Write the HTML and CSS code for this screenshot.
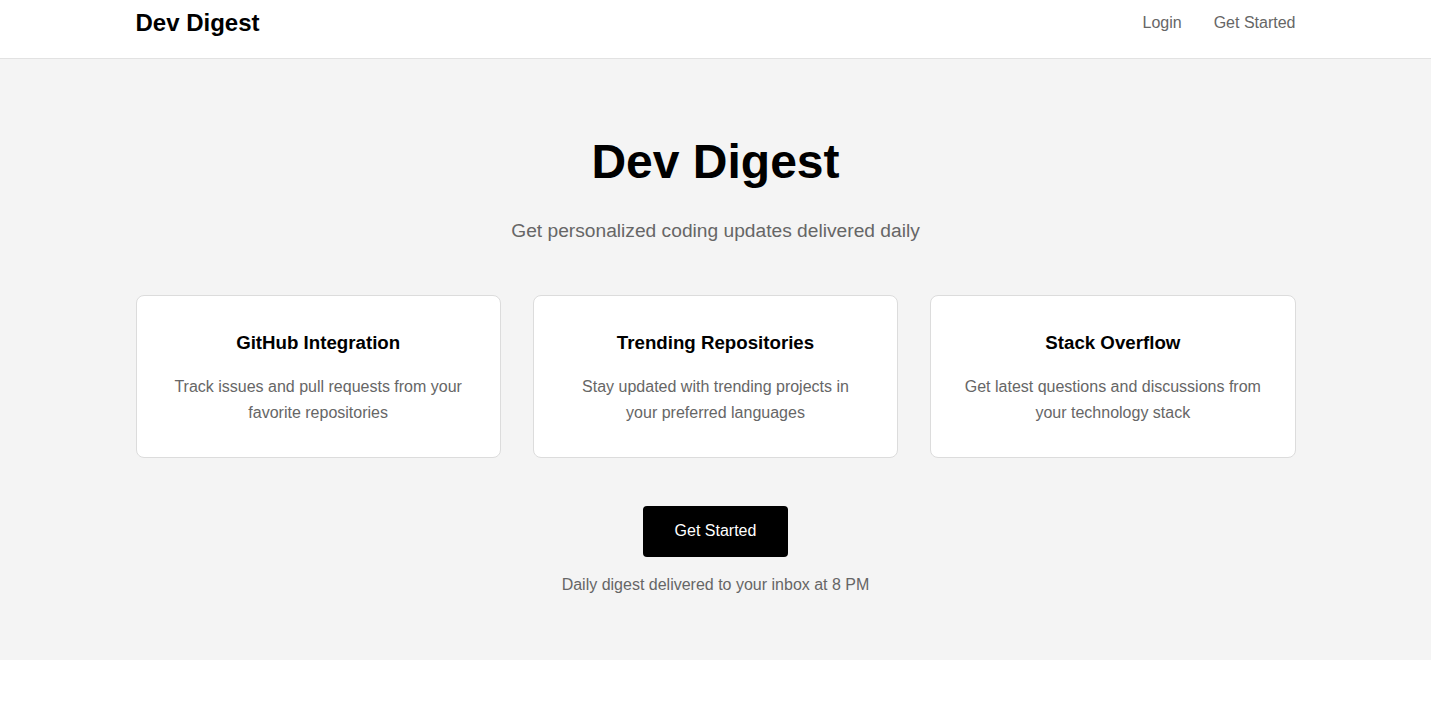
FILE: index.html
```html
<!DOCTYPE html>
<html lang="en">
<head>
<meta charset="utf-8">
<title>Dev Digest</title>
<link rel="stylesheet" href="styles.css">
</head>
<body>
<header class="site-header">
  <div class="container header-inner">
    <div class="logo">Dev Digest</div>
    <nav class="nav">
      <a href="#" class="nav-link">Login</a>
      <a href="#" class="nav-link">Get Started</a>
    </nav>
  </div>
</header>
<main class="hero">
  <div class="container hero-inner">
    <h1 class="hero-title">Dev Digest</h1>
    <p class="hero-subtitle">Get personalized coding updates delivered daily</p>
    <div class="features">
      <div class="card">
        <h3 class="card-title">GitHub Integration</h3>
        <p class="card-text">Track issues and pull requests from your favorite repositories</p>
      </div>
      <div class="card">
        <h3 class="card-title">Trending Repositories</h3>
        <p class="card-text">Stay updated with trending projects in your preferred languages</p>
      </div>
      <div class="card">
        <h3 class="card-title">Stack Overflow</h3>
        <p class="card-text">Get latest questions and discussions from your technology stack</p>
      </div>
    </div>
    <button class="cta">Get Started</button>
    <p class="note">Daily digest delivered to your inbox at 8 PM</p>
  </div>
</main>
</body>
</html>
```
FILE: styles.css
```css
* { box-sizing: border-box; }
html, body { margin: 0; padding: 0; }
body {
  font-family: "Liberation Sans", Arial, sans-serif;
  line-height: 1.6;
  color: #000;
  background: #fff;
}
.container {
  width: 1160px;
  margin: 0 auto;
}
.site-header {
  border-bottom: 1px solid #e2e2e2;
  padding-bottom: 13px;
}
.header-inner {
  height: 45px;
  display: flex;
  align-items: center;
  justify-content: space-between;
}
.logo {
  font-size: 24px;
  font-weight: 700;
  line-height: 1.15;
}
.nav {
  display: flex;
  gap: 32px;
  margin-top: 2px;
}
.nav-link {
  font-size: 16px;
  color: #666;
  text-decoration: none;
  line-height: 1.15;
}
.hero {
  background: #f4f4f4;
  padding: 74px 0 63px;
}
.hero-inner {
  display: flex;
  flex-direction: column;
  align-items: center;
  text-align: center;
}
.hero-title {
  font-size: 48px;
  font-weight: 700;
  line-height: 1.2;
  margin: 0 0 25px;
}
.hero-subtitle {
  font-size: 19.2px;
  color: #666;
  margin: 0 0 49px;
}
.features {
  width: 100%;
  display: grid;
  grid-template-columns: repeat(3, 1fr);
  gap: 32px;
  margin-bottom: 48px;
}
.card {
  background: #fff;
  border: 1px solid #dcdcdc;
  border-radius: 8px;
  padding: 32px;
}
.card-title {
  font-size: 18.7px;
  font-weight: 700;
  margin: 0 0 16px;
}
.card-text {
  font-size: 16px;
  color: #666;
  margin: 0;
}
.cta {
  font-family: inherit;
  font-size: 16px;
  line-height: 1.15;
  color: #fff;
  background: #000;
  border: none;
  border-radius: 4px;
  padding: 16px 32px;
  cursor: pointer;
}
.note {
  font-size: 16px;
  color: #666;
  margin: 15px 0 0;
}
```
